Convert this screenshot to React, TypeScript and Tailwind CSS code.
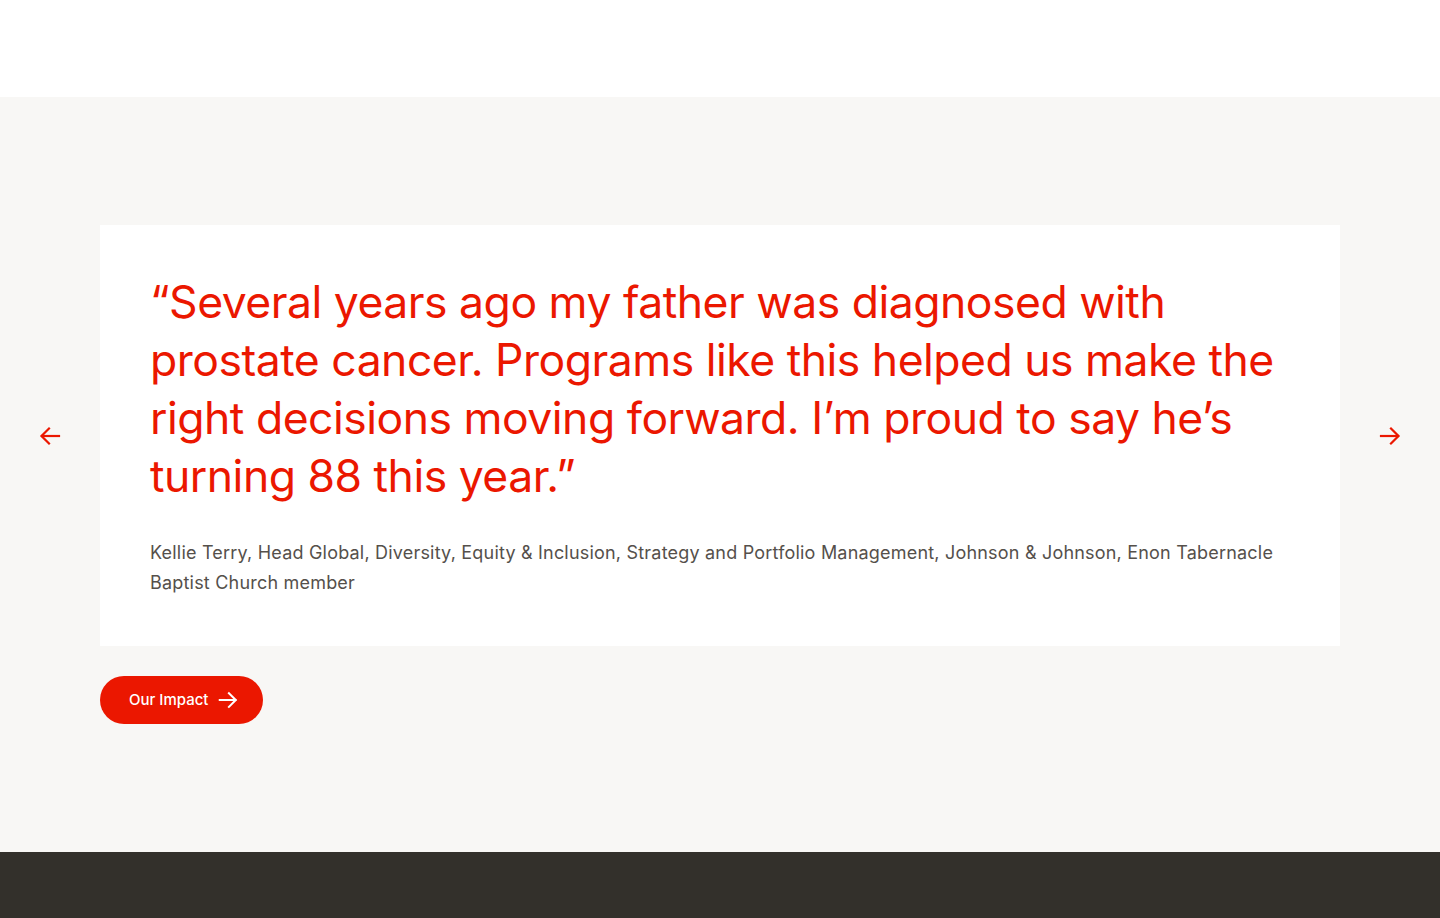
import React from "react";

const ArrowLeft = ({ className }: { className?: string }) => (
  <svg viewBox="0 0 24 24" className={className} fill="none" stroke="currentColor" strokeWidth={2.2} strokeLinecap="square">
    <path d="M21 12H4" />
    <path d="M11 4.5L3.5 12L11 19.5" />
  </svg>
);

const ArrowRight = ({ className }: { className?: string }) => (
  <svg viewBox="0 0 24 24" className={className} fill="none" stroke="currentColor" strokeWidth={2.2} strokeLinecap="square">
    <path d="M3 12h17" />
    <path d="M13 4.5L20.5 12L13 19.5" />
  </svg>
);

const Testimonial = () => (
  <div className="flex flex-col gap-[30px]">
    <div className="flex flex-row items-center">
      <div className="w-[100px] flex justify-center">
        <button className="text-[#eb1700] cursor-pointer">
          <ArrowLeft className="w-6 h-6" />
        </button>
      </div>
      <div className="flex-1 bg-white px-[50px] pt-[48px] pb-[48px]">
        <p className="font-['Inter',sans-serif] text-[#eb1700] text-[44.5px] leading-[58px] tracking-[-0.5px]">
          “Several years ago my father was diagnosed with prostate cancer. Programs like this helped us make the right decisions moving forward. I’m proud to say he’s turning 88 this year.”
        </p>
        <p className="mt-[33px] font-['Inter',sans-serif] text-[#55504b] text-[18px] leading-[30px] tracking-[0.2px]">
          Kellie Terry, Head Global, Diversity, Equity &amp; Inclusion, Strategy and Portfolio Management, Johnson &amp; Johnson, Enon Tabernacle Baptist Church member
        </p>
      </div>
      <div className="w-[100px] flex justify-center">
        <button className="text-[#eb1700] cursor-pointer">
          <ArrowRight className="w-6 h-6" />
        </button>
      </div>
    </div>
    <div className="px-[100px]">
      <a className="inline-flex items-center gap-[9px] h-12 pl-[29px] pr-[24px] rounded-full bg-[#eb1700] text-white font-['Inter',sans-serif] text-[15px] font-medium">
        Our Impact
        <ArrowRight className="w-[22px] h-[22px]" />
      </a>
    </div>
  </div>
);

export default function App() {
  return (
    <div className="min-h-[918px] flex flex-col bg-white">
      <div className="h-[97px] bg-white" />
      <section className="bg-[#f8f7f5] py-[128px]">
        <Testimonial />
      </section>
      <footer className="flex-1 bg-[#33302b]" />
    </div>
  );
}
